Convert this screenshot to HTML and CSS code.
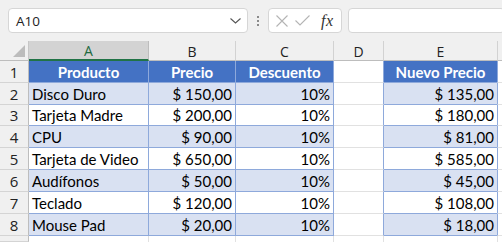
FILE: index.html
```html
<!DOCTYPE html>
<html lang="es">
<head>
<meta charset="utf-8">
<link rel="stylesheet" href="styles.css">
</head>
<body>
<div class="topbar">
  <div class="namebox">
    <span class="nb-text">A10</span>
    <svg class="chev" width="11" height="6" viewBox="0 0 11 6"><path d="M0.5 0.5 L5.5 5 L10.5 0.5" fill="none" stroke="#555" stroke-width="1.1"/></svg>
  </div>
  <div class="dots"><span></span><span></span><span></span></div>
  <div class="fxbox">
    <svg width="12" height="12" viewBox="0 0 12 12"><path d="M0.5 0.5 L11.5 11.5 M11.5 0.5 L0.5 11.5" stroke="#b4b4b4" stroke-width="1.1" fill="none"/></svg>
    <svg width="15" height="11" viewBox="0 0 15 11"><path d="M0.5 5.5 L5 10 L14.5 0.5" stroke="#b4b4b4" stroke-width="1.1" fill="none"/></svg>
    <span class="fx">fx</span>
  </div>
  <div class="formula"></div>
</div>
<div class="sheet">
  <div class="corner"><div class="tri"></div></div>
  <div class="ch sel">A</div>
  <div class="ch">B</div>
  <div class="ch">C</div>
  <div class="ch">D</div>
  <div class="ch">E</div>
  <div class="ch last"></div>

  <div class="rh">1</div>
  <div class="c hd">Producto</div>
  <div class="c hd">Precio</div>
  <div class="c hd">Descuento</div>
  <div class="c d"></div>
  <div class="c hd">Nuevo Precio</div>
  <div class="c g"></div>

  <div class="rh">2</div>
  <div class="c b">Disco Duro</div>
  <div class="c b r">$ 150,00</div>
  <div class="c b r">10%</div>
  <div class="c d"></div>
  <div class="c b r">$ 135,00</div>
  <div class="c g"></div>

  <div class="rh">3</div>
  <div class="c w">Tarjeta Madre</div>
  <div class="c w r">$ 200,00</div>
  <div class="c w r">10%</div>
  <div class="c d"></div>
  <div class="c w r">$ 180,00</div>
  <div class="c g"></div>

  <div class="rh">4</div>
  <div class="c b">CPU</div>
  <div class="c b r">$ 90,00</div>
  <div class="c b r">10%</div>
  <div class="c d"></div>
  <div class="c b r">$ 81,00</div>
  <div class="c g"></div>

  <div class="rh">5</div>
  <div class="c w">Tarjeta de Video</div>
  <div class="c w r">$ 650,00</div>
  <div class="c w r">10%</div>
  <div class="c d"></div>
  <div class="c w r">$ 585,00</div>
  <div class="c g"></div>

  <div class="rh">6</div>
  <div class="c b">Audífonos</div>
  <div class="c b r">$ 50,00</div>
  <div class="c b r">10%</div>
  <div class="c d"></div>
  <div class="c b r">$ 45,00</div>
  <div class="c g"></div>

  <div class="rh">7</div>
  <div class="c w">Teclado</div>
  <div class="c w r">$ 120,00</div>
  <div class="c w r">10%</div>
  <div class="c d"></div>
  <div class="c w r">$ 108,00</div>
  <div class="c g"></div>

  <div class="rh">8</div>
  <div class="c b">Mouse Pad</div>
  <div class="c b r">$ 20,00</div>
  <div class="c b r">10%</div>
  <div class="c d"></div>
  <div class="c b r">$ 18,00</div>
  <div class="c g"></div>

  <div class="rh"></div>
  <div class="c e"></div>
  <div class="c e"></div>
  <div class="c e"></div>
  <div class="c e"></div>
  <div class="c e"></div>
  <div class="c e"></div>
</div>
</body>
</html>
```
FILE: styles.css
```css
* { box-sizing: border-box; }
html, body {
  margin: 0;
  padding: 0;
  width: 502px;
  height: 242px;
  overflow: hidden;
  background: #f0f0f0;
}
body {
  font-family: "Open Sans", "Noto Sans", sans-serif;
}
.topbar {
  display: flex;
  align-items: center;
  height: 41px;
  padding: 8px 0 8px 8px;
}
.namebox {
  width: 240px;
  height: 25px;
  background: #fff;
  border: 1px solid #d6d6d6;
  border-radius: 4px;
  display: flex;
  align-items: center;
  justify-content: space-between;
  padding: 0 6px 0 7px;
  font-size: 13.5px;
  color: #222;
}
.chev { margin-top: 1px; }
.dots {
  width: 20px;
  display: flex;
  flex-direction: column;
  align-items: center;
  gap: 2px;
}
.dots span {
  width: 2px;
  height: 2px;
  background: #8a8a8a;
}
.fxbox {
  width: 74px;
  height: 25px;
  background: #fff;
  border: 1px solid #d6d6d6;
  border-radius: 4px;
  display: flex;
  align-items: center;
  padding: 0 4px 0 7px;
  gap: 7px;
}
.fx {
  font-family: "Liberation Serif", "DejaVu Serif", serif;
  font-style: italic;
  font-size: 16px;
  color: #333;
  margin-left: 4px;
  letter-spacing: 0.5px;
}
.formula {
  flex: 1;
  height: 25px;
  margin-left: 6px;
  margin-right: -3px;
  background: #fff;
  border: 1px solid #d6d6d6;
  border-radius: 4px;
}
.sheet {
  display: grid;
  grid-template-columns: 29px 120px 87px 98px 50px 114px 1fr;
  grid-template-rows: 20px 22px 22px 21px 22px 22px 22px 22px 22px 1fr;
  height: 201px;
  background: #fff;
}
.corner {
  background: #f0f0f0;
  border-right: 1px solid #c6c6c6;
  border-bottom: 1px solid #bdbdbd;
  position: relative;
}
.tri {
  position: absolute;
  right: 3px;
  bottom: 3px;
  width: 0;
  height: 0;
  border-left: 12px solid transparent;
  border-bottom: 12px solid #bcbcbc;
}
.ch {
  background: #f0f0f0;
  border-right: 1px solid #d2d2d2;
  border-bottom: 1px solid #bdbdbd;
  display: flex;
  align-items: center;
  justify-content: center;
  font-size: 14px;
  color: #222;
  padding-top: 1px;
}
.ch.sel {
  background: #d3d3d3;
  border-bottom: 2px solid #217346;
  color: #1e6a40;
  border-right-color: #bdbdbd;
}
.ch.last { border-right: none; }
.rh {
  background: #f0f0f0;
  border-right: 1px solid #bdbdbd;
  border-bottom: 1px solid #d4d4d4;
  display: flex;
  align-items: center;
  justify-content: center;
  font-size: 15px;
  color: #222;
}
.c {
  font-family: "Lato", "Liberation Sans", sans-serif;
  font-size: 15px;
  color: #000;
  display: flex;
  align-items: center;
  padding: 0 3px 0 3px;
  white-space: nowrap;
  overflow: hidden;
  border-right: 1px solid #8ea9db;
  border-bottom: 1px solid #8ea9db;
}
.c.r { justify-content: flex-end; }
.c.hd {
  background: #4472c4;
  color: #fff;
  font-weight: bold;
  justify-content: center;
}
.c.b { background: #d9e1f2; }
.c.w { background: #fff; }
.c.d {
  background: #fff;
  border-bottom: 1px solid #e1e1e1;
}
.c.g {
  background: #fff;
  border-left: 1px solid #8ea9db;
  border-right: none;
  border-bottom: 1px solid #e1e1e1;
  margin-left: -1px;
}
.c.e {
  background: #fff;
  border-right: 1px solid #e1e1e1;
  border-bottom: none;
}
```
